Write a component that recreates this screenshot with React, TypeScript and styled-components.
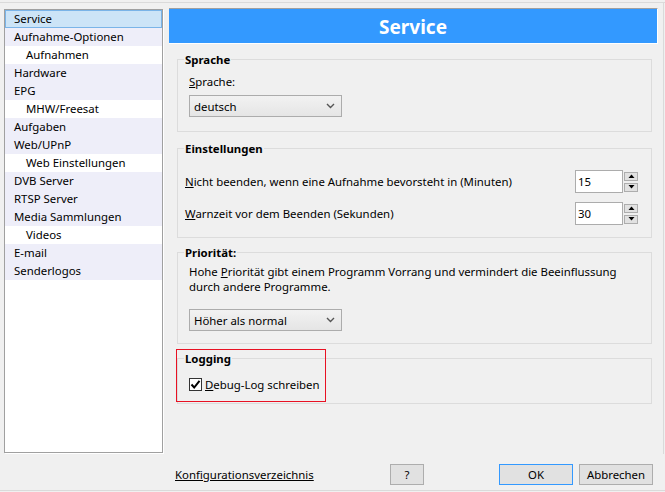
import styled, { createGlobalStyle } from 'styled-components';

const GlobalStyle = createGlobalStyle`
  html, body {
    margin: 0;
    padding: 0;
    background: #f0f0f0;
  }
  body {
    font-family: "Noto Sans", "Open Sans", sans-serif;
    font-size: 11.4px;
    line-height: 15px;
    color: #000;
  }
  * {
    box-sizing: border-box;
  }
`;

const Window = styled.div`
  width: 665px;
  height: 492px;
  padding-top: 2px;
  display: flex;
  flex-direction: column;
  overflow: hidden;
`;

const Main = styled.div`
  display: flex;
  height: 452px;
  border-top: 1px solid #dadada;
`;

const NavList = styled.ul`
  list-style: none;
  margin: 6px 0 0 4px;
  padding: 0;
  width: 159px;
  height: 444px;
  background: #fff;
  border: 1px solid #a0a0a0;
  box-shadow: 1px 1px 0 #fff;
`;

const NavItem = styled.li<{ $sub?: boolean; $selected?: boolean }>`
  height: 18px;
  line-height: 16px;
  padding-left: ${(p) => (p.$sub ? 20 : 8)}px;
  white-space: nowrap;
  background: ${(p) => (p.$selected ? '#cce4f7' : p.$sub ? '#fff' : '#eeeef9')};
  border: 1px solid ${(p) => (p.$selected ? '#7ab4e8' : 'transparent')};
`;

const Panel = styled.div`
  margin-left: 3px;
  width: 498px;
  padding: 5px 0 0 3px;
  border-right: 1px solid #dadada;
`;

const Header = styled.div`
  width: 489px;
  height: 36px;
  background: #3399ff;
  border-top: 1px solid #a0a0a0;
  border-right: 1px solid #fff;
  border-bottom: 1px solid #fff;
  color: #fff;
  font-weight: 700;
  font-size: 19px;
  line-height: 36px;
  text-align: center;
`;

const Groups = styled.div`
  padding-left: 8px;
`;

const Group = styled.fieldset<{ $top: number }>`
  position: relative;
  width: 475px;
  margin: ${(p) => p.$top}px 0 0;
  padding: 0;
  border: 1px solid #dcdcdc;
  min-width: 0;
`;

const Legend = styled.legend`
  margin-left: 6px;
  padding: 0 1px;
  font-weight: 700;
  line-height: 15px;
`;

const Body = styled.div<{ $inset: number; $top: number; $bottom: number }>`
  padding: ${(p) => p.$top}px 13px ${(p) => p.$bottom}px ${(p) => p.$inset}px;
`;

const Label = styled.div`
  line-height: 15px;
`;

const Combo = styled.div<{ $width: number; $top: number }>`
  width: ${(p) => p.$width}px;
  height: 22px;
  margin-top: ${(p) => p.$top}px;
  display: flex;
  align-items: center;
  justify-content: space-between;
  padding: 0 6px 0 4px;
  border: 1px solid #acacac;
  background: linear-gradient(#f2f2f2, #e5e5e5);
`;

const Chevron = () => (
  <svg width="9" height="6" viewBox="0 0 9 6">
    <path d="M1 1 L4.5 4.5 L8 1" fill="none" stroke="#555" strokeWidth="1.4" />
  </svg>
);

const SpinRow = styled.div`
  display: flex;
  align-items: center;
  height: 23px;

  & + & {
    margin-top: 9px;
  }
`;

const SpinLabel = styled.div`
  flex: 1;
`;

const SpinInput = styled.div`
  width: 48px;
  height: 23px;
  border: 1px solid #acacac;
  background: #fff;
  padding-left: 2px;
  line-height: 21px;
`;

const SpinButtons = styled.div`
  display: flex;
  flex-direction: column;
  gap: 2px;
  margin-left: 1px;
`;

const SpinButton = styled.div`
  width: 14px;
  height: 9px;
  border: 1px solid #adadad;
  background: #e1e1e1;
  display: flex;
  align-items: center;
  justify-content: center;
`;

const Arrow = ({ down }: { down?: boolean }) => (
  <svg width="7" height="4" viewBox="0 0 7 4">
    <path d={down ? 'M0.5 0 L6.5 0 L3.5 3.5 Z' : 'M0.5 4 L6.5 4 L3.5 0.5 Z'} fill="#000" />
  </svg>
);

const Paragraph = styled.p`
  margin: 0;
  line-height: 15px;
  white-space: nowrap;
`;

const CheckRow = styled.label`
  display: flex;
  align-items: center;
  gap: 3px;
  line-height: 15px;
`;

const CheckBox = styled.span`
  width: 13px;
  height: 13px;
  border: 1px solid #333;
  background: #fff;
  display: flex;
  align-items: center;
  justify-content: center;
`;

const Highlight = styled.div`
  position: absolute;
  left: -2px;
  top: -17px;
  width: 150px;
  height: 53px;
  border: 1px solid #e81123;
  pointer-events: none;
`;

const Footer = styled.div`
  height: 37px;
  display: flex;
  align-items: center;
  padding: 5px 0 0 175px;
  border-bottom: 1px solid #dadada;
`;

const FooterLink = styled.a`
  width: 215px;
  color: #000;
  text-decoration: underline;
`;

const Button = styled.button<{ $width: number; $gap?: number; $default?: boolean }>`
  width: ${(p) => p.$width}px;
  height: 21px;
  margin-left: ${(p) => p.$gap ?? 0}px;
  padding: 0;
  font: inherit;
  color: #000;
  background: #e1e1e1;
  border: 1px solid ${(p) => (p.$default ? '#3399ff' : '#adadad')};
`;

const navItems: { label: string; sub?: boolean }[] = [
  { label: 'Service' },
  { label: 'Aufnahme-Optionen' },
  { label: 'Aufnahmen', sub: true },
  { label: 'Hardware' },
  { label: 'EPG' },
  { label: 'MHW/Freesat', sub: true },
  { label: 'Aufgaben' },
  { label: 'Web/UPnP' },
  { label: 'Web Einstellungen', sub: true },
  { label: 'DVB Server' },
  { label: 'RTSP Server' },
  { label: 'Media Sammlungen' },
  { label: 'Videos', sub: true },
  { label: 'E-mail' },
  { label: 'Senderlogos' },
];

export default function App() {
  return (
    <>
      <GlobalStyle />
      <Window>
        <Main>
          <NavList>
            {navItems.map((item, i) => (
              <NavItem key={item.label} $sub={item.sub} $selected={i === 0}>
                {item.label}
              </NavItem>
            ))}
          </NavList>
          <Panel>
            <Header>Service</Header>
            <Groups>
              <Group $top={8}>
                <Legend>Sprache</Legend>
                <Body $inset={11} $top={7} $bottom={14}>
                  <Label>
                    <u>S</u>prache:
                  </Label>
                  <Combo $width={153} $top={6}>
                    <span>deutsch</span>
                    <Chevron />
                  </Combo>
                </Body>
              </Group>

              <Group $top={9}>
                <Legend>Einstellungen</Legend>
                <Body $inset={7} $top={14} $bottom={12}>
                  <SpinRow>
                    <SpinLabel>
                      <u>N</u>icht beenden, wenn eine Aufnahme bevorsteht in (Minuten)
                    </SpinLabel>
                    <SpinInput>15</SpinInput>
                    <SpinButtons>
                      <SpinButton>
                        <Arrow />
                      </SpinButton>
                      <SpinButton>
                        <Arrow down />
                      </SpinButton>
                    </SpinButtons>
                  </SpinRow>
                  <SpinRow>
                    <SpinLabel>
                      <u>W</u>arnzeit vor dem Beenden (Sekunden)
                    </SpinLabel>
                    <SpinInput>30</SpinInput>
                    <SpinButtons>
                      <SpinButton>
                        <Arrow />
                      </SpinButton>
                      <SpinButton>
                        <Arrow down />
                      </SpinButton>
                    </SpinButtons>
                  </SpinRow>
                </Body>
              </Group>

              <Group $top={7}>
                <Legend>Priorität:</Legend>
                <Body $inset={11} $top={4} $bottom={12}>
                  <Paragraph>
                    Hohe <u>P</u>riorität gibt einem Programm Vorrang und vermindert die Beeinflussung
                    <br />
                    durch andere Programme.
                  </Paragraph>
                  <Combo $width={153} $top={15}>
                    <span>Höher als normal</span>
                    <Chevron />
                  </Combo>
                </Body>
              </Group>

              <Group $top={7}>
                <Legend>Logging</Legend>
                <Body $inset={11} $top={11} $bottom={11}>
                  <CheckRow>
                    <CheckBox>
                      <svg width="11" height="11" viewBox="0 0 11 11">
                        <path d="M1.5 5.5 L4.2 8.5 L9.5 1.8" fill="none" stroke="#000" strokeWidth="2" />
                      </svg>
                    </CheckBox>
                    <span>
                      <u>D</u>ebug-Log schreiben
                    </span>
                  </CheckRow>
                </Body>
                <Highlight />
              </Group>
            </Groups>
          </Panel>
        </Main>
        <Footer>
          <FooterLink>Konfigurationsverzeichnis</FooterLink>
          <Button $width={34}>?</Button>
          <Button $width={74} $gap={75} $default>
            OK
          </Button>
          <Button $width={74} $gap={6}>
            Abbrechen
          </Button>
        </Footer>
      </Window>
    </>
  );
}
